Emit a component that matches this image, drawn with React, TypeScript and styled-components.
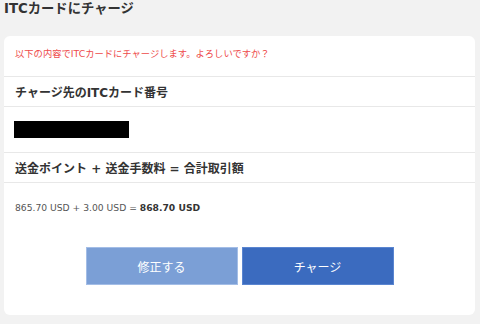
import React from 'react'
import styled, { createGlobalStyle } from 'styled-components'

const GlobalStyle = createGlobalStyle`
  html, body {
    margin: 0;
    padding: 0;
    background: #f2f2f2;
  }
  body {
    font-family: "DejaVu Sans", "Noto Sans CJK JP", sans-serif;
    color: #333;
  }
`

const Page = styled.div`
  width: 480px;
  height: 324px;
  padding: 0 5px 0 4px;
  box-sizing: border-box;
  overflow: hidden;
`

const PageTitle = styled.h1`
  margin: 0;
  height: 36px;
  font-size: 13.3px;
  line-height: 18px;
  font-weight: bold;
  color: #333;
`

const Card = styled.section`
  background: #fff;
  border-radius: 6px;
  height: 279px;
  display: flex;
  flex-direction: column;
`

const Row = styled.div<{ $height: number }>`
  height: ${p => p.$height}px;
  display: flex;
  align-items: center;
  padding: 0 11px;
  border-bottom: 1px solid #e8e8e8;
  box-sizing: border-box;
`

const Notice = styled.p`
  margin: 0 0 7px;
  font-size: 9.3px;
  color: #ee4a4a;
`

const RowTitle = styled.h2`
  margin: 0;
  font-size: 12px;
  font-weight: bold;
  color: #333;
`

const Masked = styled.div`
  width: 115px;
  height: 17px;
  background: #000;
  margin-left: -1px;
`

const Amount = styled.p`
  margin: 19px 0 0;
  padding: 0 11px;
  font-size: 9.2px;
  color: #555;

  strong {
    color: #333;
  }
`

const Actions = styled.div`
  display: flex;
  justify-content: center;
  gap: 4px;
  margin-top: 34px;
`

const Button = styled.button<{ $primary?: boolean }>`
  width: 152px;
  height: 38px;
  border: 1px solid ${p => (p.$primary ? '#5a85d0' : '#a3bde6')};
  background: ${p => (p.$primary ? '#3b6bbf' : '#7b9fd6')};
  color: #fff;
  font-family: "Noto Sans CJK JP", sans-serif;
  font-size: 12px;
  cursor: pointer;
`

export default function App() {
  return (
    <>
      <GlobalStyle />
      <Page>
        <PageTitle>ITCカードにチャージ</PageTitle>
        <Card>
          <Row $height={41}>
            <Notice>以下の内容でITCカードにチャージします。よろしいですか？</Notice>
          </Row>
          <Row $height={30}>
            <RowTitle>チャージ先のITCカード番号</RowTitle>
          </Row>
          <Row $height={46}>
            <Masked />
          </Row>
          <Row $height={30}>
            <RowTitle>送金ポイント + 送金手数料 = 合計取引額</RowTitle>
          </Row>
          <Amount>
            865.70 USD + 3.00 USD = <strong>868.70 USD</strong>
          </Amount>
          <Actions>
            <Button type="button">修正する</Button>
            <Button type="button" $primary>チャージ</Button>
          </Actions>
        </Card>
      </Page>
    </>
  )
}
